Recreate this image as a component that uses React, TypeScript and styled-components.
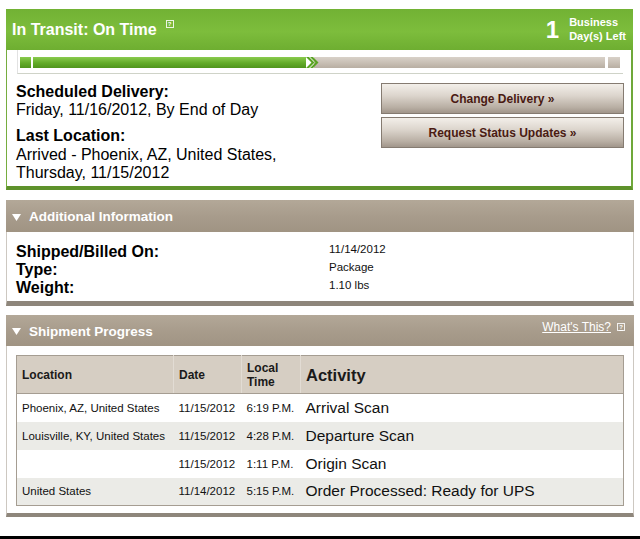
import React from "react";
import styled, { createGlobalStyle } from "styled-components";

const Global = createGlobalStyle`
  html, body { margin: 0; padding: 0; background: #fff; }
  body { font-family: "Liberation Sans", Arial, Helvetica, sans-serif; color: #000; }
  * { box-sizing: border-box; }
`;

const Page = styled.div`
  width: 640px;
  height: 539px;
  overflow: hidden;
  padding: 9px 6px 0 6px;
  display: flex;
  flex-direction: column;
`;

const StatusCard = styled.section`
  width: 627px;
  border-left: 1px solid #76ad3f;
  border-right: 2px solid #6fa83a;
  border-bottom: 4px solid #5e922b;
`;

const StatusHeader = styled.header`
  height: 41px;
  margin-left: -1px;
  margin-right: -2px;
  padding: 1px 7px 0 6px;
  display: flex;
  align-items: center;
  justify-content: space-between;
  background: linear-gradient(to bottom, #72b234 0%, #7dbd3c 55%, #6eae31 100%);
  color: #fff;
`;

const Title = styled.h1`
  margin: 0;
  font-size: 16px;
  font-weight: bold;
  display: flex;
  align-items: flex-start;
  line-height: 18px;
`;

const HelpBox = styled.span<{ $top?: number; $ml?: number }>`
  display: inline-flex;
  align-items: center;
  justify-content: center;
  width: 8px;
  height: 8px;
  margin-left: ${(p) => p.$ml ?? 9}px;
  margin-top: ${(p) => p.$top ?? -1}px;
  border: 1px solid rgba(255, 255, 255, 0.85);
  font-size: 6px;
  line-height: 6px;
  font-weight: bold;
  color: #fff;
`;

const DaysLeft = styled.div`
  display: flex;
  align-items: center;
`;

const DaysCount = styled.span`
  font-size: 24px;
  font-weight: bold;
  line-height: 24px;
`;

const DaysLabel = styled.span`
  margin-left: 10px;
  font-size: 11px;
  font-weight: bold;
  line-height: 14px;
  margin-top: -3px;
`;

const ProgressRow = styled.div`
  height: 24px;
  padding: 0 8px 0 10px;
`;

const Track = styled.div`
  height: 24px;
  border-left: 1px solid #e2e2e2;
  border-bottom: 1px solid #cfd3c8;
  padding: 7px 3px 0 2px;
  display: flex;
  align-items: flex-start;
`;

const Segment = styled.div<{ $tone: "green" | "gray"; $w?: number }>`
  height: 11px;
  ${(p) => (p.$w ? `width: ${p.$w}px; flex: none;` : "flex: 1;")}
  background: ${(p) =>
    p.$tone === "green"
      ? "linear-gradient(to bottom, #8acb4e 0%, #62ab28 55%, #4f951c 100%)"
      : "linear-gradient(to bottom, #d8d1c8 0%, #c6bdb2 60%, #b8aea2 100%)"};
`;

const Chevron = styled.svg`
  flex: none;
  width: 14px;
  height: 13px;
  margin: -1px -5px 0 -1px;
  position: relative;
  z-index: 1;
`;

const DetailRow = styled.div`
  display: flex;
  justify-content: space-between;
  padding: 9px 7px 4px 9px;
`;

const DetailText = styled.div`
  display: flex;
  flex-direction: column;
`;

const FieldLabel = styled.div<{ $mt?: number; $mb?: number }>`
  font-size: 16px;
  font-weight: bold;
  line-height: 18px;
  margin-top: ${(p) => p.$mt ?? 0}px;
  margin-bottom: ${(p) => p.$mb ?? 0}px;
`;

const FieldValue = styled.div`
  font-size: 16px;
  line-height: 18px;
`;

const ButtonStack = styled.div`
  width: 243px;
  display: flex;
  flex-direction: column;
  gap: 3px;
`;

const ActionButton = styled.button`
  height: 31px;
  width: 100%;
  border: 1px solid #857b71;
  background: linear-gradient(to bottom, #f3efea 0%, #dcd5cd 40%, #b9afa4 80%, #a1968b 100%);
  color: #4a1a12;
  font-family: "Liberation Sans", Arial, sans-serif;
  font-size: 12px;
  font-weight: bold;
  cursor: pointer;
  padding: 0;
`;

const Panel = styled.section<{ $mt: number; $band: number }>`
  margin-top: ${(p) => p.$mt}px;
  border-left: 1px solid #cdc8c1;
  border-right: 1px solid #cdc8c1;
  border-bottom: ${(p) => p.$band}px solid #8e867b;
`;

const PanelHeader = styled.header<{ $h: number }>`
  height: ${(p) => p.$h}px;
  margin: 0 -1px;
  padding: 2px 9px 0 6px;
  display: flex;
  align-items: center;
  justify-content: space-between;
  background: linear-gradient(to bottom, #b3a898 0%, #a89c8c 50%, #a09483 100%);
  color: #fff;
`;

const PanelTitle = styled.h2`
  margin: 0;
  display: flex;
  align-items: center;
  font-size: 13.5px;
  font-weight: bold;
  line-height: 16px;
`;

const Caret = styled.svg`
  width: 9px;
  height: 7px;
  margin-right: 8px;
`;

const HelpLink = styled.a`
  display: flex;
  align-items: center;
  color: #fff;
  font-size: 12px;
  text-decoration: underline;
  margin-top: -10px;
`;

const InfoGrid = styled.div`
  display: grid;
  grid-template-columns: 313px 1fr;
  grid-auto-rows: 18px;
  padding: 11px 9px 4px 9px;
`;

const InfoLabel = styled.div`
  font-size: 16px;
  font-weight: bold;
  line-height: 18px;
`;

const InfoValue = styled.div`
  font-size: 11.5px;
  line-height: 13px;
  color: #111;
`;

const TableWrap = styled.div`
  padding: 9px 9px 7px 9px;
`;

const Table = styled.table`
  width: 100%;
  border-collapse: collapse;
  border: 1px solid #a59d92;
  table-layout: fixed;
`;

const HeadCell = styled.th<{ $big?: boolean; $last?: boolean }>`
  height: 38px;
  padding: 0 5px;
  text-align: left;
  vertical-align: middle;
  background: #d6cec3;
  border-bottom: 1px solid #a59d92;
  border-right: ${(p) => (p.$last ? "none" : "1px solid #e2dcd4")};
  font-size: ${(p) => (p.$big ? "16.5px" : "12px")};
  line-height: 14px;
  font-weight: bold;
  color: #1a1a1a;
`;

const BodyRow = styled.tr<{ $alt: boolean }>`
  background: ${(p) => (p.$alt ? "#ebebe7" : "#ffffff")};
`;

const Cell = styled.td<{ $big?: boolean }>`
  height: 28px;
  padding: 0 5px;
  vertical-align: middle;
  font-size: ${(p) => (p.$big ? "15.5px" : "11.5px")};
  color: #111;
  white-space: nowrap;
  overflow: hidden;
`;

const FooterRule = styled.div`
  margin-top: auto;
  height: 3px;
  background: #000;
  margin-left: -6px;
  margin-right: -6px;
`;

const rows = [
  { loc: "Phoenix, AZ, United States", date: "11/15/2012", time: "6:19 P.M.", act: "Arrival Scan" },
  { loc: "Louisville, KY, United States", date: "11/15/2012", time: "4:28 P.M.", act: "Departure Scan" },
  { loc: "", date: "11/15/2012", time: "1:11 P.M.", act: "Origin Scan" },
  { loc: "United States", date: "11/14/2012", time: "5:15 P.M.", act: "Order Processed: Ready for UPS" },
];

const CaretIcon = () => (
  <Caret viewBox="0 0 9 7">
    <polygon points="0,0 9,0 4.5,7" fill="#fff" />
  </Caret>
);

export default function App() {
  return (
    <>
      <Global />
      <Page>
        <StatusCard>
          <StatusHeader>
            <Title>
              In Transit: On Time
              <HelpBox>?</HelpBox>
            </Title>
            <DaysLeft>
              <DaysCount>1</DaysCount>
              <DaysLabel>
                Business
                <br />
                Day(s) Left
              </DaysLabel>
            </DaysLeft>
          </StatusHeader>
          <ProgressRow>
            <Track>
              <Segment $tone="green" $w={11} />
              <Segment $tone="green" $w={273} style={{ marginLeft: 2 }} />
              <Chevron viewBox="0 0 14 13">
                <path d="M1 1 L6.5 6.5 L1 12 L4 12 L9.5 6.5 L4 1 Z" fill="#5aa323" />
                <path d="M5 1 L10.5 6.5 L5 12 L8 12 L13.5 6.5 L8 1 Z" fill="#5aa323" />
              </Chevron>
              <Segment $tone="gray" />
              <Segment $tone="gray" $w={12} style={{ marginLeft: 3 }} />
            </Track>
          </ProgressRow>
          <DetailRow>
            <DetailText>
              <FieldLabel>Scheduled Delivery:</FieldLabel>
              <FieldValue>Friday, 11/16/2012, By End of Day</FieldValue>
              <FieldLabel $mt={8} $mb={1}>
                Last Location:
              </FieldLabel>
              <FieldValue>Arrived - Phoenix, AZ, United States,</FieldValue>
              <FieldValue>Thursday, 11/15/2012</FieldValue>
            </DetailText>
            <ButtonStack>
              <ActionButton>Change Delivery »</ActionButton>
              <ActionButton>Request Status Updates »</ActionButton>
            </ButtonStack>
          </DetailRow>
        </StatusCard>

        <Panel $mt={10} $band={5}>
          <PanelHeader $h={32}>
            <PanelTitle>
              <CaretIcon />
              Additional Information
            </PanelTitle>
          </PanelHeader>
          <InfoGrid>
            <InfoLabel>Shipped/Billed On:</InfoLabel>
            <InfoValue>11/14/2012</InfoValue>
            <InfoLabel>Type:</InfoLabel>
            <InfoValue>Package</InfoValue>
            <InfoLabel>Weight:</InfoLabel>
            <InfoValue>1.10 lbs</InfoValue>
          </InfoGrid>
        </Panel>

        <Panel $mt={9} $band={4}>
          <PanelHeader $h={31}>
            <PanelTitle>
              <CaretIcon />
              Shipment Progress
            </PanelTitle>
            <HelpLink href="#">
              What's This?
              <HelpBox $top={0} $ml={6}>?</HelpBox>
            </HelpLink>
          </PanelHeader>
          <TableWrap>
            <Table>
              <colgroup>
                <col style={{ width: 157 }} />
                <col style={{ width: 68 }} />
                <col style={{ width: 59 }} />
                <col />
              </colgroup>
              <thead>
                <tr>
                  <HeadCell>Location</HeadCell>
                  <HeadCell>Date</HeadCell>
                  <HeadCell>
                    Local
                    <br />
                    Time
                  </HeadCell>
                  <HeadCell $big $last>
                    Activity
                  </HeadCell>
                </tr>
              </thead>
              <tbody>
                {rows.map((r, i) => (
                  <BodyRow key={i} $alt={i % 2 === 1}>
                    <Cell>{r.loc}</Cell>
                    <Cell>{r.date}</Cell>
                    <Cell>{r.time}</Cell>
                    <Cell $big>{r.act}</Cell>
                  </BodyRow>
                ))}
              </tbody>
            </Table>
          </TableWrap>
        </Panel>
        <FooterRule />
      </Page>
    </>
  );
}
